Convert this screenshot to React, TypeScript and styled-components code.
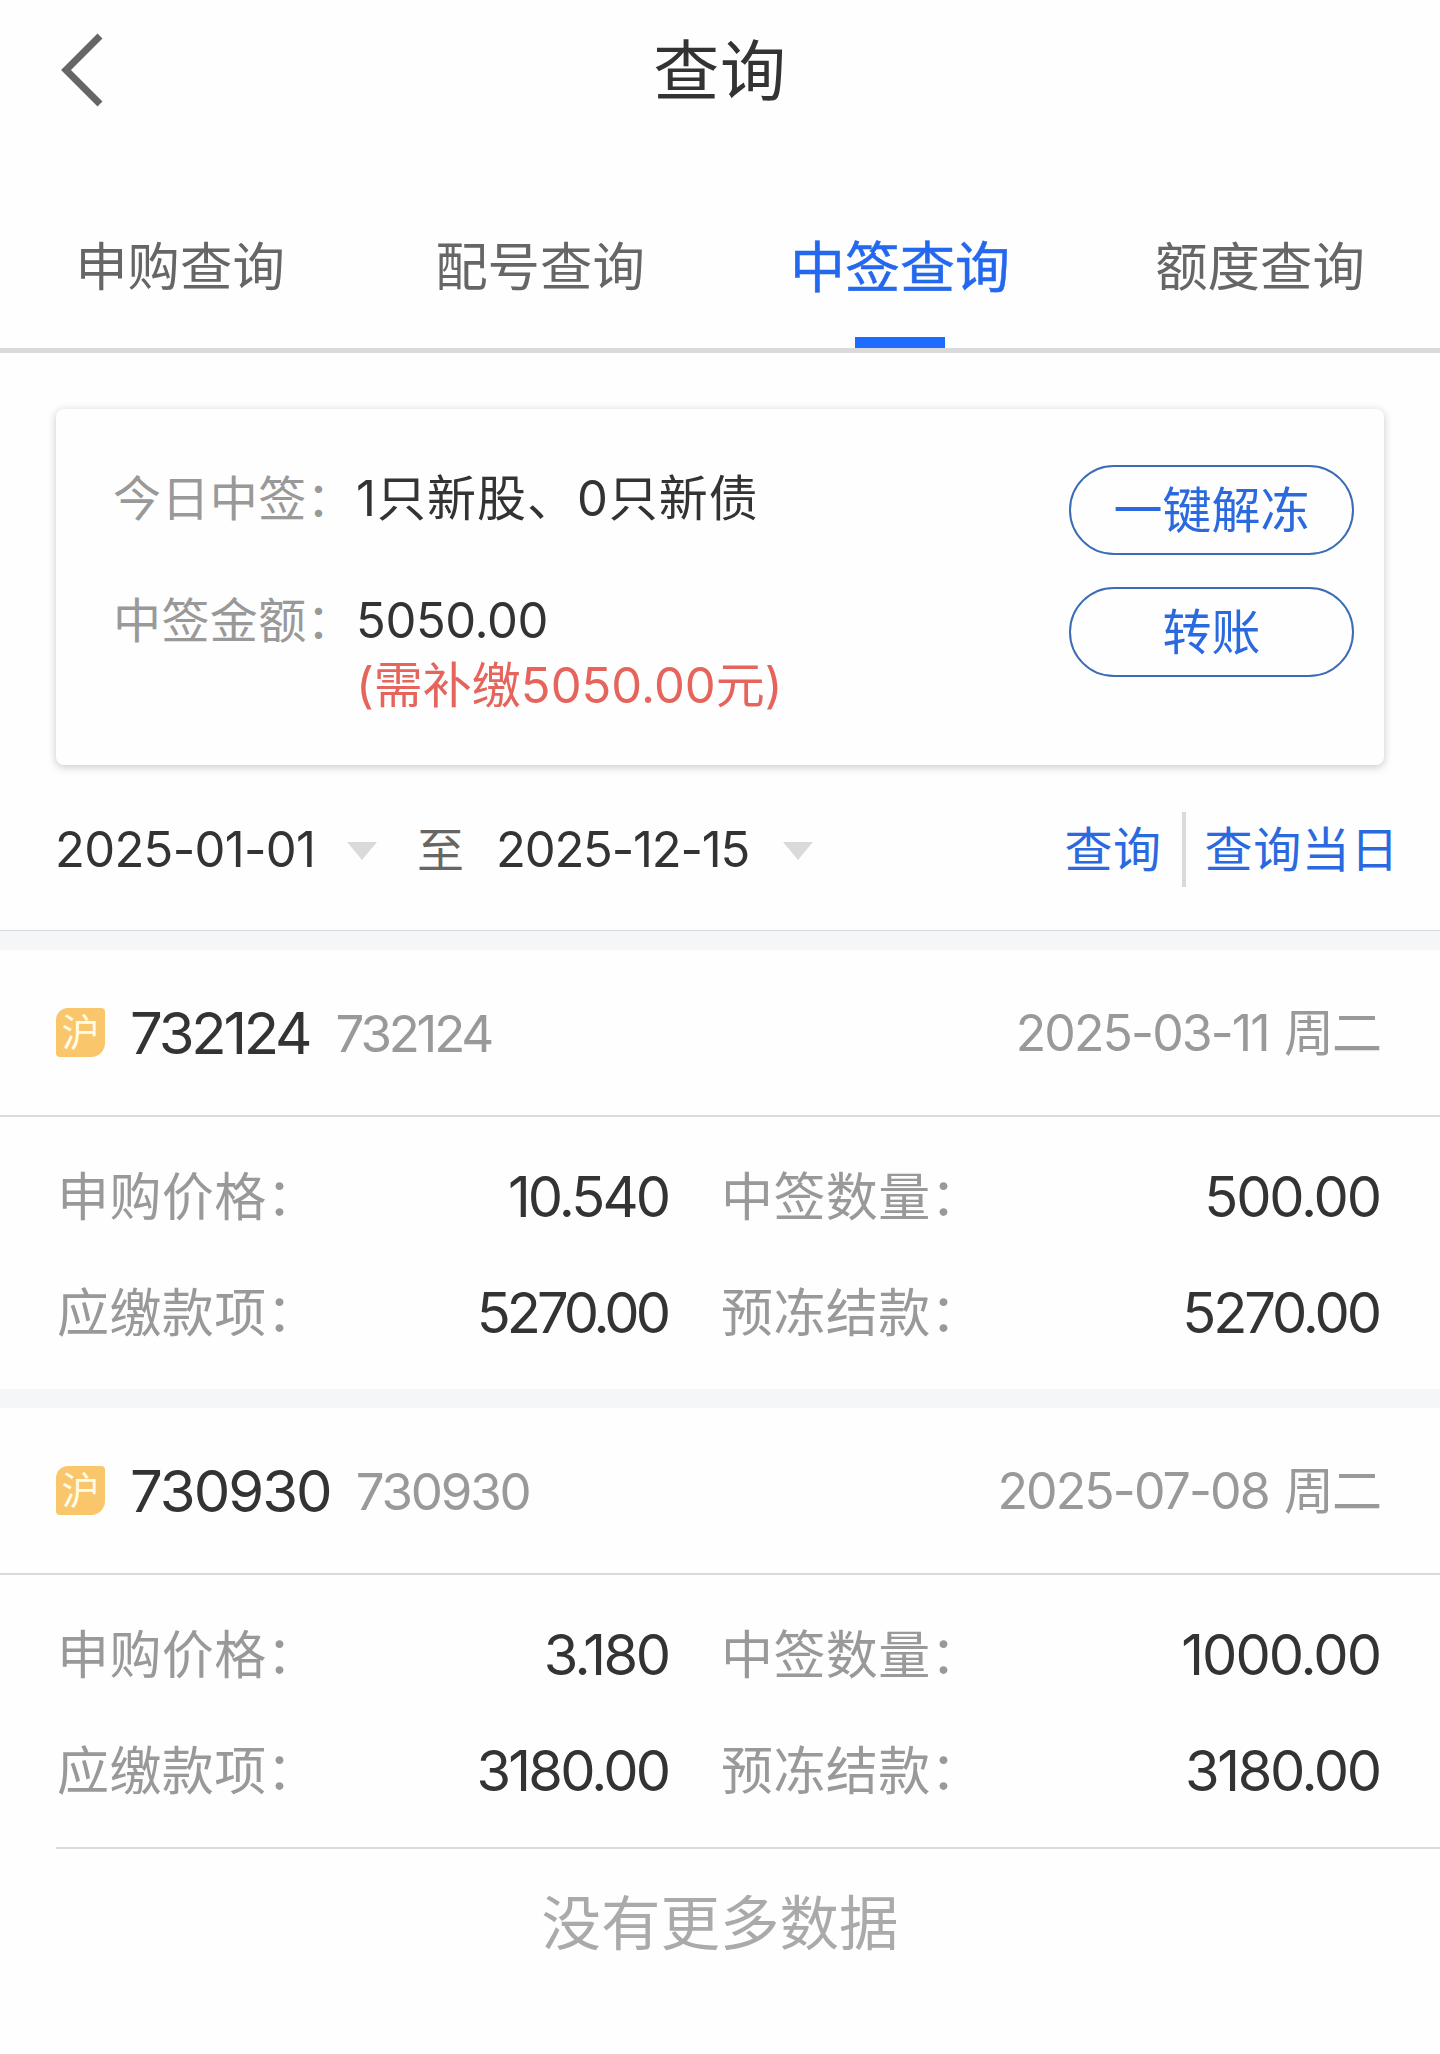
import React, { useState } from 'react';

import styled, { createGlobalStyle } from 'styled-components';

interface NumberText {
  text: string;
  tracking: number;
}

interface FieldData {
  label: string;
  value: NumberText;
}

interface RecordData {
  code: NumberText;
  name: NumberText;
  date: NumberText;
  fields: FieldData[];
}

const TABS = ['申购查询', '配号查询', '中签查询', '额度查询'];

const RECORDS: RecordData[] = [
  {
    code: { text: '732124', tracking: -3.2 },
    name: { text: '732124', tracking: -3.2 },
    date: { text: '2025-03-11 周二', tracking: -1.9 },
    fields: [
      { label: '申购价格：', value: { text: '10.540', tracking: -2.9 } },
      { label: '中签数量：', value: { text: '500.00', tracking: -2.2 } },
      { label: '应缴款项：', value: { text: '5270.00', tracking: -4 } },
      { label: '预冻结款：', value: { text: '5270.00', tracking: -3.1 } },
    ],
  },
  {
    code: { text: '730930', tracking: -2 },
    name: { text: '730930', tracking: -2.2 },
    date: { text: '2025-07-08 周二', tracking: -1.9 },
    fields: [
      { label: '申购价格：', value: { text: '3.180', tracking: -2.5 } },
      { label: '中签数量：', value: { text: '1000.00', tracking: -2 } },
      { label: '应缴款项：', value: { text: '3180.00', tracking: -2.8 } },
      { label: '预冻结款：', value: { text: '3180.00', tracking: -2.4 } },
    ],
  },
];

function App() {
  const [activeTab, setActiveTab] = useState<string>('中签查询');

  return (
    <Page>
      <GlobalStyle />
      <Header>
        <BackButton aria-label="返回">
          <svg width="44" height="76" viewBox="0 0 44 76" fill="none">
            <path d="M40 4L6 38L40 72" stroke="#666" strokeWidth="7" />
          </svg>
        </BackButton>
        <Title>查询</Title>
      </Header>

      <TabBar>
        {TABS.map((tab) => (
          <Tab key={tab} onClick={() => setActiveTab(tab)} $isActive={tab === activeTab}>
            {tab}
          </Tab>
        ))}
      </TabBar>

      <SummaryCard>
        <SummaryList>
          <SummaryRow>
            <SummaryLabel>今日中签：</SummaryLabel>
            <SummaryValue $tracking={1}>1只新股、0只新债</SummaryValue>
          </SummaryRow>
          <SummaryRow>
            <SummaryLabel>中签金额：</SummaryLabel>
            <div>
              <SummaryValue $tracking={-0.4}>5050.00</SummaryValue>
              <Shortfall>(需补缴5050.00元)</Shortfall>
            </div>
          </SummaryRow>
        </SummaryList>
        <SummaryActions>
          <PillButton>一键解冻</PillButton>
          <PillButton>转账</PillButton>
        </SummaryActions>
      </SummaryCard>

      <FilterBar>
        <DatePicker $width={322} $tracking={-0.7}>
          2025-01-01
          <Caret />
        </DatePicker>
        <To>至</To>
        <DatePicker $width={317} $tracking={-1.2}>
          2025-12-15
          <Caret />
        </DatePicker>
        <FilterActions>
          <LinkButton>查询</LinkButton>
          <Separator />
          <LinkButton>查询当日</LinkButton>
        </FilterActions>
      </FilterBar>

      {RECORDS.map(({ code, name, date, fields }) => (
        <Record key={code.text}>
          <RecordHeader>
            <MarketBadge>沪</MarketBadge>
            <Code $tracking={code.tracking}>{code.text}</Code>
            <Name $tracking={name.tracking}>{name.text}</Name>
            <RecordDate $tracking={date.tracking}>{date.text}</RecordDate>
          </RecordHeader>
          <FieldGrid>
            {fields.map(({ label, value }) => (
              <Field key={label}>
                <FieldLabel>{label}</FieldLabel>
                <FieldValue $tracking={value.tracking}>{value.text}</FieldValue>
              </Field>
            ))}
          </FieldGrid>
        </Record>
      ))}

      <ListEnd>没有更多数据</ListEnd>
    </Page>
  );
}

export default App;

const GlobalStyle = createGlobalStyle`
  * {
    box-sizing: border-box;
  }

  body {
    margin: 0;
    background-color: #fefefe;
  }

  button {
    border: 0;
    background: none;
    padding: 0;
    font: inherit;
    cursor: pointer;
  }
`;

const Page = styled.div`
  width: 1440px;
  min-height: 2054px;
  background-color: #fefefe;
  color: #333;
  font-family: Inter, 'Noto Sans CJK SC', sans-serif;
  font-size: 49px;
  line-height: 65px;
  white-space: nowrap;
`;

const Header = styled.header`
  display: grid;
  grid-template-columns: 160px 1fr 160px;
  align-items: center;
  height: 140px;
`;

const BackButton = styled.button`
  display: flex;
  padding-left: 60px;
`;

const Title = styled.h1`
  margin: 0;
  padding-top: 3px;
  text-align: center;
  letter-spacing: 0.8px;
  font-size: 66px;
  font-weight: 400;
`;

const TabBar = styled.nav`
  display: grid;
  grid-template-columns: repeat(4, 1fr);
  border-bottom: 5px solid #dadada;
  height: 213px;
`;

const Tab = styled.button<{ $isActive: boolean }>`
  display: flex;
  flex-direction: column;
  align-items: center;
  justify-content: flex-end;
  color: ${({ $isActive }) => ($isActive ? '#2468ee' : '#666')};
  font-size: ${({ $isActive }) => ($isActive ? '55px' : '52.4px')};
  -webkit-text-stroke: ${({ $isActive }) => ($isActive ? '0.5px' : '0')};

  &::after {
    margin-top: 37px;
    background-color: ${({ $isActive }) => ($isActive ? '#1e6bff' : 'transparent')};
    width: 90px;
    height: 11px;
    content: '';
  }
`;

const SummaryCard = styled.section`
  display: flex;
  justify-content: space-between;
  margin: 56px 56px 0;
  border-radius: 8px;
  box-shadow: 0 2px 9px rgba(0, 0, 0, 0.22);
  background-color: #fefefe;
  padding: 56px 30px 0 57px;
  height: 356px;
`;

const SummaryList = styled.div`
  display: flex;
  flex-direction: column;
  gap: 57px;
  padding-top: 1px;
`;

const SummaryRow = styled.div`
  display: flex;
`;

const SummaryLabel = styled.span`
  width: 243px;
  color: #999;
  font-size: 48px;
  letter-spacing: 0.4px;
`;

const SummaryValue = styled.div<{ $tracking: number }>`
  letter-spacing: ${({ $tracking }) => $tracking}px;
  color: #333;
`;

const Shortfall = styled.div`
  color: #e5655d;
`;

const SummaryActions = styled.div`
  display: flex;
  flex-direction: column;
  gap: 32px;
`;

const PillButton = styled.button`
  border: 2px solid #3b6cb5;
  border-radius: 45px;
  width: 285px;
  height: 90px;
  color: #2b69df;
`;

const FilterBar = styled.section`
  display: flex;
  align-items: center;
  border-bottom: 1px solid #d8d8d8;
  padding: 3px 41px 0 55px;
  height: 166px;
`;

const DatePicker = styled.div<{ $width: number; $tracking: number }>`
  display: flex;
  align-items: center;
  justify-content: space-between;
  width: ${({ $width }) => $width}px;
  letter-spacing: ${({ $tracking }) => $tracking}px;
`;

const Caret = styled.i`
  margin-top: 4px;
  border-top: 18px solid #dadada;
  border-right: 15.5px solid transparent;
  border-left: 15.5px solid transparent;
`;

const To = styled.span`
  margin: 0 32px 0 40px;
  color: #666;
  font-size: 47px;
`;

const FilterActions = styled.div`
  display: flex;
  align-items: center;
  margin-left: auto;
`;

const LinkButton = styled.button`
  color: #2b69df;
  font-size: 48px;
  letter-spacing: 0.6px;
`;

const Separator = styled.i`
  margin: 0 19px 0 20px;
  background-color: #dadada;
  width: 4px;
  height: 75px;
`;

const Record = styled.article`
  border-top: 19px solid #f5f6f8;
  height: 458px;
`;

const RecordHeader = styled.div`
  display: flex;
  align-items: center;
  border-bottom: 2px solid #dadada;
  padding: 2px 58px 0 56px;
  height: 167px;
`;

const MarketBadge = styled.span`
  display: flex;
  align-items: center;
  justify-content: center;
  margin-bottom: 2px;
  border-radius: 12px 4px 14px 4px;
  background-color: #f9c66c;
  width: 49px;
  height: 49px;
  color: #fffbe6;
  font-size: 38px;
`;

// 字距为负时，右侧补回最后一个字符被吃掉的宽度
const TrackedText = styled.span<{ $tracking: number }>`
  padding-right: ${({ $tracking }) => -$tracking}px;
  letter-spacing: ${({ $tracking }) => $tracking}px;
`;

const Code = styled(TrackedText)`
  margin-left: 25px;
  font-size: 58px;
`;

const Name = styled(TrackedText)`
  margin-left: 23px;
  color: #999;
  font-size: 51px;
`;

const RecordDate = styled(TrackedText)`
  margin-left: auto;
  color: #999;
  font-size: 50px;
  word-spacing: 3px;
`;

const FieldGrid = styled.div`
  display: grid;
  grid-template-columns: 614px 661px;
  column-gap: 50px;
  padding: 22px 56px 0 57px;
`;

const Field = styled.div`
  display: flex;
  align-items: center;
  justify-content: space-between;
  height: 116px;
`;

const FieldLabel = styled.span`
  color: #999;
  font-size: 52px;
  letter-spacing: 0.4px;
`;

const FieldValue = styled(TrackedText)`
  font-size: 56px;
`;

const ListEnd = styled.footer`
  margin-left: 56px;
  border-top: 2px solid #dadada;
  padding: 42px 56px 0 0;
  text-align: center;
  color: #aaa;
  font-size: 59.5px;
`;
